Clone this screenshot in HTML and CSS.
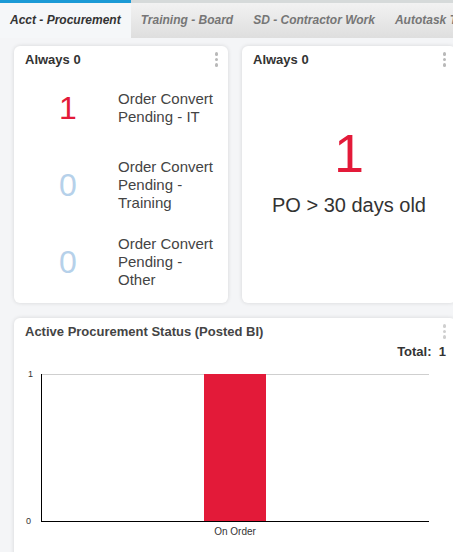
FILE: index.html
```html
<!DOCTYPE html>
<html>
<head>
<meta charset="utf-8">
<link rel="stylesheet" href="styles.css">
</head>
<body>
<nav class="tabs">
  <div class="tab active">Acct - Procurement</div>
  <div class="tab">Training - Board</div>
  <div class="tab">SD - Contractor Work</div>
  <div class="tab">Autotask Tickets</div>
</nav>
<main class="dash">
  <div class="top-row">
    <section class="card small">
      <header class="card-head">
        <h2 class="card-title">Always 0</h2>
        <span class="kebab"><i></i><i></i><i></i></span>
      </header>
      <div class="metric-list">
        <div class="metric">
          <span class="num red">1</span>
          <span class="label">Order Convert Pending - IT</span>
        </div>
        <div class="metric">
          <span class="num blue">0</span>
          <span class="label">Order Convert Pending - Training</span>
        </div>
        <div class="metric">
          <span class="num blue">0</span>
          <span class="label">Order Convert Pending - Other</span>
        </div>
      </div>
    </section>
    <section class="card small">
      <header class="card-head">
        <h2 class="card-title">Always 0</h2>
        <span class="kebab"><i></i><i></i><i></i></span>
      </header>
      <div class="big-metric">
        <span class="big-num">1</span>
        <span class="big-label">PO &gt; 30 days old</span>
      </div>
    </section>
  </div>
  <section class="card wide">
    <header class="card-head">
      <h2 class="card-title muted">Active Procurement Status (Posted BI)</h2>
      <span class="kebab light"><i></i><i></i><i></i></span>
    </header>
    <div class="total">Total:&nbsp; 1</div>
    <svg class="chart" width="442" height="200" viewBox="0 0 442 200">
      <line x1="27" y1="12.5" x2="415" y2="12.5" stroke="#cfcfcf" stroke-width="1"/>
      <rect x="190" y="12" width="62" height="147" fill="#e31a39"/>
      <line x1="27.5" y1="12" x2="27.5" y2="160" stroke="#000" stroke-width="1"/>
      <line x1="27" y1="159.5" x2="415" y2="159.5" stroke="#000" stroke-width="1"/>
      <text x="14" y="15" class="tick">1</text>
      <text x="12" y="162" class="tick">0</text>
      <text x="221" y="173" class="cat" text-anchor="middle">On Order</text>
    </svg>
  </section>
</main>
</body>
</html>
```
FILE: styles.css
```css
html, body {
  margin: 0;
  padding: 0;
  overflow: hidden;
  background: #f4f5f7;
  font-family: "Liberation Sans", Arial, sans-serif;
  width: 453px;
  height: 552px;
}

.tabs {
  display: flex;
  height: 38px;
  background: #f4f5f7;
  white-space: nowrap;
  overflow: hidden;
}

.tab {
  box-sizing: border-box;
  padding: 10px 10px 0;
  height: 38px;
  border-top: 3px solid #d6dada;
  background: linear-gradient(#f2f2f2, #dedede);
  font-size: 12px;
  font-weight: bold;
  font-style: italic;
  color: #767676;
  line-height: 15px;
  flex: none;
}

.tab.active {
  border-top-color: #1b9ad6;
  background: #f5f7f9;
  color: #333;
}

.dash {
  padding: 8px 0 0 14px;
  display: flex;
  flex-direction: column;
  gap: 15px;
  width: 442px;
}

.top-row {
  display: flex;
  gap: 14px;
}

.card {
  background: #fff;
  border-radius: 6px;
  box-shadow: 0 0 4px rgba(0, 0, 0, 0.13);
  flex: none;
}

.card.small {
  width: 214px;
  height: 257px;
  display: flex;
  flex-direction: column;
}

.card.wide {
  width: 442px;
  height: 250px;
}

.card-head {
  display: flex;
  justify-content: space-between;
  align-items: flex-start;
  padding: 6px 10px 0 11px;
  height: 17px;
}

.card-title {
  margin: 0;
  font-size: 13px;
  font-weight: bold;
  color: #333;
  line-height: 15px;
}

.card-title.muted {
  color: #444;
}

.kebab {
  display: flex;
  flex-direction: column;
  gap: 2px;
}

.kebab i {
  display: block;
  width: 3.5px;
  height: 3.5px;
  border-radius: 50%;
  background: #b9b9b9;
}

.kebab.light i {
  background: #cfcfcf;
}

.metric-list {
  display: flex;
  flex-direction: column;
}

.metric {
  height: 77px;
  display: grid;
  grid-template-columns: 88px 1fr;
  column-gap: 6px;
  align-items: center;
  padding-left: 10px;
}

.num {
  text-align: center;
  font-size: 32px;
  line-height: 36px;
}

.num.red { color: #e31a39; }
.num.blue { color: #b6d1ea; }

.label {
  font-size: 15px;
  line-height: 18px;
  color: #444;
  padding-right: 12px;
}

.big-metric {
  display: flex;
  flex-direction: column;
  align-items: center;
  padding-top: 57px;
}

.big-num {
  font-size: 54px;
  line-height: 54px;
  color: #e31a39;
}

.big-label {
  margin-top: 13px;
  font-size: 20px;
  line-height: 24px;
  color: #333;
}

.total {
  text-align: right;
  padding-right: 10px;
  margin-top: 3px;
  font-size: 13px;
  font-weight: bold;
  color: #333;
  line-height: 15px;
}

.chart {
  display: block;
  margin-top: 3px;
}

.tick {
  font-size: 9px;
  fill: #333;
}

.cat {
  font-size: 10px;
  fill: #333;
}
```
